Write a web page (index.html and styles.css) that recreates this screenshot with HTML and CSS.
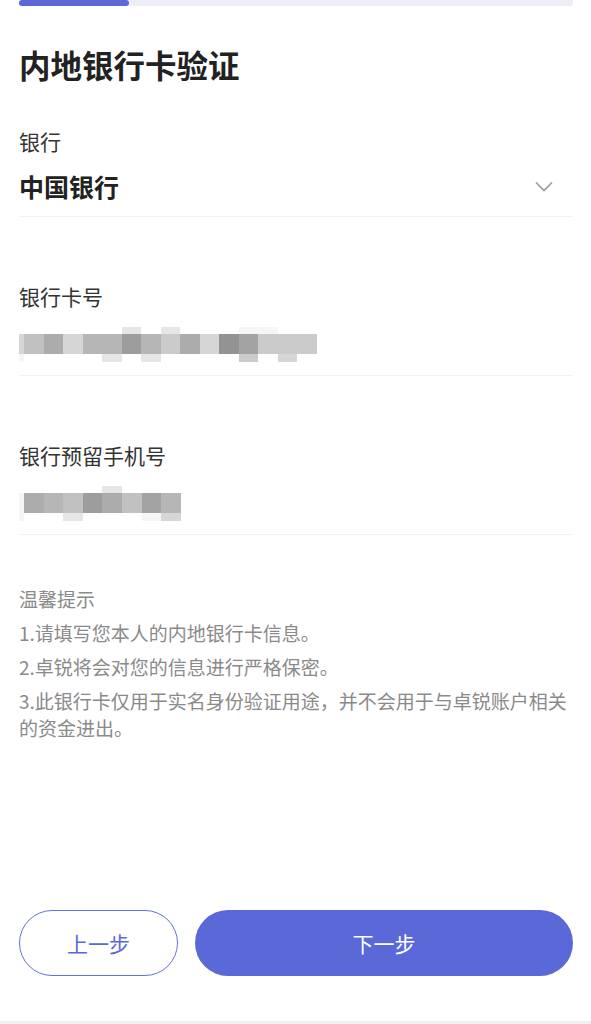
FILE: index.html
```html
<!DOCTYPE html>
<html lang="zh-CN">
<head>
    <meta charset="UTF-8">
    <meta name="viewport" content="width=device-width, initial-scale=1.0">
    <title>内地银行卡验证</title>
    <link rel="stylesheet" href="styles.css">
</head>
<body>
    <div class="page">
        <div class="progress">
            <div class="progress__fill"></div>
        </div>

        <h1 class="page__title">内地银行卡验证</h1>

        <div class="field field--first">
            <div class="field__label">银行</div>
            <div class="field__select">
                <span class="field__value">中国银行</span>
                <svg class="field__arrow" width="18" height="12" viewBox="0 0 18 12">
                    <path d="M1 1.5 L9 9.5 L17 1.5" fill="none" stroke="#9a9a9a" stroke-width="1.6"/>
                </svg>
            </div>
        </div>

        <div class="field">
            <div class="field__label">银行卡号</div>
            <!-- masked card number -->
            <div class="mask mask--card">
                <span></span><span></span><span></span><span></span><span></span><span></span><span class="s1"></span><span></span><span class="s1"></span><span></span><span></span><span></span><span class="s0"></span><span class="s0"></span><span></span><span></span>
                <span class="s2"></span><span class="s4"></span><span class="s6"></span><span class="s2"></span><span class="s5"></span><span class="s5"></span><span class="s8"></span><span class="s5"></span><span class="s3"></span><span class="s6"></span><span class="s2"></span><span class="s9"></span><span class="s7"></span><span class="s3"></span><span class="s3"></span><span class="s3"></span>
                <span class="s0"></span><span></span><span></span><span></span><span></span><span class="s1"></span><span></span><span class="s1"></span><span></span><span></span><span></span><span></span><span class="s3"></span><span></span><span class="s2"></span><span></span>
            </div>
        </div>

        <div class="field">
            <div class="field__label">银行预留手机号</div>
            <div class="mask mask--phone">
                <span></span><span></span><span></span><span></span><span></span><span class="s1"></span><span></span><span></span><span></span>
                <span class="s0"></span><span class="s6"></span><span class="s5"></span><span class="s4"></span><span class="s8"></span><span class="s6"></span><span class="s4"></span><span class="s7"></span><span class="s5"></span>
                <span class="s0"></span><span></span><span></span><span class="s1"></span><span></span><span></span><span></span><span class="s0"></span><span class="s2"></span>
            </div>
        </div>

        <div class="tips">
            <div class="tips__title">温馨提示</div>
            <p class="tips__item">1.请填写您本人的内地银行卡信息。</p>
            <p class="tips__item">2.卓锐将会对您的信息进行严格保密。</p>
            <p class="tips__item">3.此银行卡仅用于实名身份验证用途，并不会用于与卓锐账户相关的资金进出。</p>
        </div>

        <div class="actions">
            <button class="btn btn--ghost">上一步</button>
            <button class="btn btn--primary">下一步</button>
        </div>

        <div class="home-bar"></div>
    </div>
</body>
</html>
```

FILE: styles.css
```css
* {
    box-sizing: border-box;
    margin: 0;
    padding: 0;
}

body {
    background-color: #fff;
    font-family: "Noto Sans CJK SC", "Noto Sans", sans-serif;
    color: #222;
}

.page {
    display: flex;
    flex-direction: column;
    min-height: 100vh;
    padding: 0 18px 0 19px;
}

.progress {
    height: 6px;
    background-color: #ededf8;
    border-radius: 0 0 3px 3px;
}

.progress__fill {
    width: 110px;
    height: 100%;
    background-color: #5a68d8;
    border-radius: 3px;
}

.page__title {
    margin-top: 38px;
    font-size: 31.5px;
    line-height: 40px;
    font-weight: 700;
    color: #222;
}

.field {
    padding: 65px 0 13px;
    border-bottom: 1px solid #f1f1f3;
}

.field--first {
    padding: 43px 0 14px;
}

.field__label {
    font-size: 21px;
    line-height: 28px;
    color: #333;
}

.field__select {
    display: flex;
    align-items: center;
    justify-content: space-between;
    margin-top: 15px;
    height: 32px;
}

.field__value {
    font-size: 25px;
    font-weight: 700;
    color: #222;
}

.field__arrow {
    margin-right: 20px;
    margin-top: 2px;
}

/* pixelated placeholder for hidden numbers */
.mask {
    display: grid;
    grid-template-rows: 7px 20px 8px;
    margin-top: 17px;
}

.mask--card {
    grid-template-columns: 5px repeat(15, 19.5px);
}

.mask--phone {
    grid-template-columns: 5px repeat(8, 19.6px);
}

.mask .s0 { background-color: #f6f6f6; }
.mask .s1 { background-color: #e6e6e6; }
.mask .s2 { background-color: #d6d6d6; }
.mask .s3 { background-color: #cbcbcb; }
.mask .s4 { background-color: #c1c1c1; }
.mask .s5 { background-color: #b6b6b6; }
.mask .s6 { background-color: #acacac; }
.mask .s7 { background-color: #a3a3a3; }
.mask .s8 { background-color: #9d9d9d; }
.mask .s9 { background-color: #939393; }

.tips {
    padding-top: 50px;
    color: #8a8a8a;
    font-size: 19px;
    line-height: 27px;
}

.tips__title {
    margin-bottom: 3px;
}

.tips__item {
    margin-top: 7px;
}

.actions {
    display: flex;
    gap: 17px;
    margin-top: auto;
    margin-bottom: 45px;
}

.btn {
    height: 66px;
    border-radius: 33px;
    font-family: inherit;
    font-size: 21px;
    cursor: pointer;
}

.btn--ghost {
    width: 159px;
    background-color: #fff;
    border: 1.5px solid #6471df;
    color: #5a68d8;
}

.btn--primary {
    flex: 1;
    background-color: #5a68d8;
    border: none;
    color: #fff;
}

.home-bar {
    height: 3px;
    margin: 0 -18px 0 -19px;
    background-color: #f0f0f2;
}
```
